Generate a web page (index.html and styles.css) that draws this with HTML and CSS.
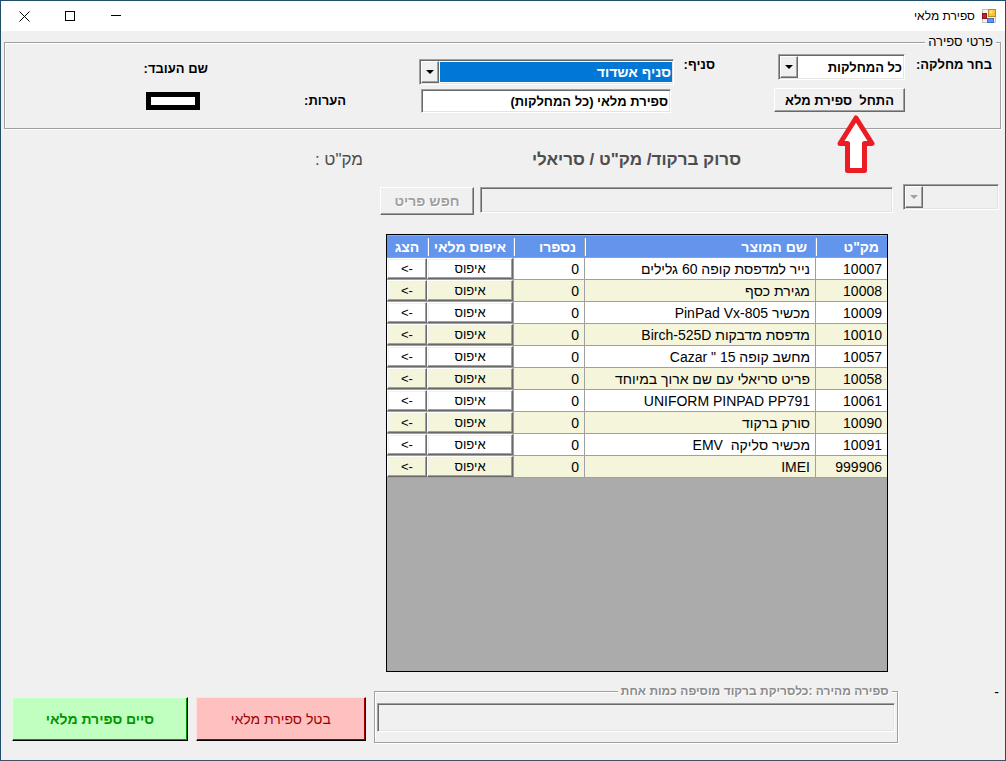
FILE: index.html
```html
<!DOCTYPE html>
<html lang="he" dir="rtl">
<head>
<meta charset="utf-8">
<title>ספירת מלאי</title>
<link rel="stylesheet" href="styles.css">
</head>
<body class="window">
  <header class="titlebar">
    <svg class="app-icon" width="14" height="14" viewBox="0 0 14 14" aria-hidden="true">
      <rect x="0.5" y="0.5" width="13" height="13" fill="#f4f4f4" stroke="#c4c4c4"/>
      <rect x="6.5" y="0.5" width="7" height="7" fill="#f7c62f" stroke="#c08a14"/>
      <rect x="7.5" y="1.5" width="3" height="3" fill="#fde78a"/>
      <rect x="0.5" y="4.5" width="4" height="5" fill="#c8202a" stroke="#8e141c"/>
      <rect x="5.5" y="9.5" width="6" height="4" fill="#5c98ee" stroke="#3a6ccc"/>
    </svg>
    <h1 class="titlebar-text">ספירת מלאי</h1>
    <button class="caption-button" type="button" aria-label="מזער">
      <svg width="11" height="11" viewBox="0 0 11 11"><path d="M0 4.5H10" stroke="#000"/></svg>
    </button>
    <button class="caption-button" type="button" aria-label="הגדל">
      <svg width="11" height="11" viewBox="0 0 11 11"><rect x="0.5" y="0.5" width="9" height="9" fill="none" stroke="#000"/></svg>
    </button>
    <button class="caption-button" type="button" aria-label="סגור">
      <svg width="11" height="11" viewBox="0 0 11 11"><path d="M0.5 0.5L10.5 10.5M10.5 0.5L0.5 10.5" stroke="#000"/></svg>
    </button>
  </header>

  <fieldset class="group details">
    <legend class="details-legend">פרטי ספירה</legend>
    <div class="details-grid">
      <div class="department">
        <label class="field-label" for="department">בחר מחלקה:</label>
        <div class="combo">
          <select id="department" class="combo-select"><option>כל המחלקות</option></select>
          <span class="combo-arrow"></span>
        </div>
        <div class="start">
          <button class="button start-button" type="button">התחל  ספירת מלא</button>
          <svg class="pointer" width="38" height="58" viewBox="0 0 38 58" aria-hidden="true">
            <path d="M19 3L35 28.500H27.500V55.500H10.500V28.500H3Z" fill="#fff" stroke="#ed1c24" stroke-width="5" stroke-linejoin="round"/>
          </svg>
        </div>
      </div>
      <div class="branch">
        <div class="branch-row">
          <label class="field-label branch-label" for="branch">סניף:</label>
          <div class="combo">
            <select id="branch" class="combo-select combo-selected"><option>סניף אשדוד</option></select>
            <span class="combo-arrow"></span>
          </div>
        </div>
        <div class="notes-row">
          <input class="textbox notes-input" type="text" id="notes" value="ספירת מלאי (כל המחלקות)">
          <label class="field-label" for="notes">הערות:</label>
        </div>
      </div>
      <div class="worker">
        <span class="field-label">שם העובד:</span>
        <div class="worker-name"></div>
      </div>
    </div>
  </fieldset>

  <main class="content">
    <label class="scan-label" for="scan">סרוק ברקוד/ מק"ט / סריאלי</label>
    <div class="sku-label">מק"ט :</div>
    <div class="combo combo-disabled">
      <select class="combo-select" aria-label="סוג" disabled><option></option></select>
      <span class="combo-arrow"></span>
    </div>
    <div class="search">
      <input class="textbox search-input" type="text" id="scan" disabled>
      <button class="button search-button" type="button" disabled>חפש פריט</button>
    </div>
    <div class="grid-view">
      <table class="items">
        <colgroup><col class="col-sku"><col><col class="col-count"><col class="col-reset"><col class="col-show"></colgroup>
        <thead>
          <tr><th>מק"ט</th><th>שם המוצר</th><th>נספרו</th><th class="center">איפוס מלאי</th><th class="center">הצג</th></tr>
        </thead>
        <tbody>
          <tr><td>10007</td><td>נייר למדפסת קופה 60 גלילים</td><td>0</td><td class="action"><button type="button">איפוס</button></td><td class="action"><button type="button">-&gt;</button></td></tr>
          <tr><td>10008</td><td>מגירת כסף</td><td>0</td><td class="action"><button type="button">איפוס</button></td><td class="action"><button type="button">-&gt;</button></td></tr>
          <tr><td>10009</td><td>מכשיר PinPad Vx-805</td><td>0</td><td class="action"><button type="button">איפוס</button></td><td class="action"><button type="button">-&gt;</button></td></tr>
          <tr><td>10010</td><td>מדפסת מדבקות Birch-525D</td><td>0</td><td class="action"><button type="button">איפוס</button></td><td class="action"><button type="button">-&gt;</button></td></tr>
          <tr><td>10057</td><td>מחשב קופה 15 " Cazar</td><td>0</td><td class="action"><button type="button">איפוס</button></td><td class="action"><button type="button">-&gt;</button></td></tr>
          <tr><td>10058</td><td>פריט סריאלי עם שם ארוך במיוחד</td><td>0</td><td class="action"><button type="button">איפוס</button></td><td class="action"><button type="button">-&gt;</button></td></tr>
          <tr><td>10061</td><td>UNIFORM PINPAD PP791</td><td>0</td><td class="action"><button type="button">איפוס</button></td><td class="action"><button type="button">-&gt;</button></td></tr>
          <tr><td>10090</td><td>סורק ברקוד</td><td>0</td><td class="action"><button type="button">איפוס</button></td><td class="action"><button type="button">-&gt;</button></td></tr>
          <tr><td>10091</td><td>מכשיר סליקה  EMV</td><td>0</td><td class="action"><button type="button">איפוס</button></td><td class="action"><button type="button">-&gt;</button></td></tr>
          <tr><td>999906</td><td>IMEI</td><td>0</td><td class="action"><button type="button">איפוס</button></td><td class="action"><button type="button">-&gt;</button></td></tr>
        </tbody>
      </table>
    </div>
  </main>

  <footer class="footer">
    <div class="status">-</div>
    <fieldset class="group quick">
      <legend class="quick-legend"><label for="quick">ספירה מהירה :כלסריקת ברקוד מוסיפה כמות אחת</label></legend>
      <input class="textbox quick-input" type="text" id="quick" disabled>
    </fieldset>
    <button class="big-button cancel" type="button">בטל ספירת מלאי</button>
    <button class="big-button finish" type="button">סיים ספירת מלאי</button>
  </footer>
</body>
</html>
```
FILE: styles.css
```css
* {
  box-sizing: border-box;
}

.window {
  display: flex;
  flex-direction: column;
  min-height: 100vh;
  margin: 0;
  border: 1px solid #1f4e6b;
  border-bottom-color: #4c4c68;
  background: #f0f0f0;
  color: #000;
  font-family: "Liberation Sans", sans-serif;
  font-size: 14px;
}

button,
input,
select {
  margin: 0;
  padding: 0;
  border-radius: 0;
  color: inherit;
  font: inherit;
}

/* Title bar */
.titlebar {
  display: flex;
  align-items: center;
  height: 30px;
  padding-right: 9px;
  background: #fff;
}

.titlebar-text {
  flex: 1;
  margin: 0 7px 0 0;
  font-size: 12px;
  font-weight: 400;
}

.caption-button {
  display: flex;
  align-items: center;
  justify-content: center;
  width: 46px;
  height: 28px;
  border: 0;
  background: none;
}

/* Shared controls */
.group {
  min-width: 0;
  margin: 0;
  padding: 0;
  border: 1px solid #a0a0a0;
  box-shadow: 1px 1px 0 #fff, inset 1px 1px 0 #fff;
}

.group > legend {
  background: #f0f0f0;
}

.field-label {
  font-size: 13px;
  font-weight: 700;
  line-height: 22px;
  white-space: nowrap;
}

.textbox,
.combo {
  border: 1px solid;
  border-color: #a0a0a0 #fff #fff #a0a0a0;
  background: #fff;
  box-shadow: inset 1px 1px 0 #696969, inset -1px -1px 0 #e3e3e3;
}

.textbox {
  min-width: 0;
  padding: 0 2px;
  font-size: 13px;
  font-weight: 700;
}

.textbox:disabled {
  background: #f0f0f0;
}

.combo {
  position: relative;
  display: flex;
  height: 26px;
  padding: 2px 1px 2px 2px;
}

.combo-select {
  flex: 1;
  min-width: 0;
  margin-left: 18px;
  padding: 0 1px;
  border: 0;
  appearance: none;
  background: transparent;
  font-size: 13px;
  font-weight: 700;
}

.combo-selected {
  background: #0078d7;
  color: #fff;
  font-size: 14px;
}

.combo-arrow {
  position: absolute;
  top: 1px;
  bottom: 1px;
  left: 1px;
  display: flex;
  align-items: center;
  justify-content: center;
  width: 18px;
  border: 1px solid;
  border-color: #fff #696969 #696969 #fff;
  background: #f0f0f0;
  box-shadow: inset -1px -1px 0 #a0a0a0;
  pointer-events: none;
}

.combo-arrow::before {
  content: "";
  border: 4px solid transparent;
  border-top-color: #000;
  border-bottom-width: 0;
}

.combo-disabled {
  background: #f0f0f0;
}

.combo-disabled .combo-arrow::before {
  border-top-color: #a0a0a0;
}

.button {
  border: 1px solid;
  border-color: #fff #696969 #696969 #fff;
  background: #f0f0f0;
  box-shadow: inset -1px -1px 0 #a0a0a0;
  font-weight: 700;
  white-space: pre;
}

/* Count details */
.details {
  margin: 4px 4px 0 3px;
}

.details-legend {
  margin-right: 4px;
  padding: 0 3px;
  font-size: 13px;
  line-height: 14px;
}

.details-grid {
  display: grid;
  grid-template-columns: 277fr 507fr 203fr;
  padding: 5px 8px 15px 0;
}

.department {
  display: grid;
  grid-template-columns: 78px 127px;
  gap: 8px 9px;
  align-content: start;
}

.start {
  position: relative;
  grid-column: 2;
}

.start-button {
  width: 131px;
  height: 24px;
  font-size: 13px;
}

.pointer {
  position: absolute;
  top: 27px;
  right: 30px;
}

.branch-row,
.notes-row {
  display: flex;
}

.branch-label {
  width: 41px;
}

.branch-row .combo {
  width: 255px;
  margin-top: 5px;
}

.notes-row {
  align-items: center;
  gap: 75px;
  padding: 4px 44px 0 0;
}

.notes-input {
  width: 250px;
  height: 24px;
}

.worker {
  padding-top: 4px;
}

.worker-name {
  width: 54px;
  height: 18px;
  margin: 12px 8px 0 0;
  border: 5px solid #000;
  background: #fff;
}

/* Scan area */
.content {
  flex: 1;
  display: grid;
  grid-template-columns: 96px 513fr 358fr;
  grid-template-rows: auto auto 1fr;
  column-gap: 10px;
  padding: 20px 6px 0 11px;
}

.scan-label,
.sku-label {
  margin-bottom: 13px;
  color: #4d4d4d;
  font-size: 17px;
  line-height: 22px;
}

.scan-label {
  grid-column: 2;
  font-weight: 700;
  text-align: center;
}

.sku-label {
  padding-right: 7px;
}

.search {
  display: flex;
  gap: 6px;
  padding-top: 3px;
}

.search-input {
  flex: 1;
  height: 26px;
}

.search-button {
  width: 94px;
  height: 28px;
  color: #a0a0a0;
  font-size: 14px;
  text-shadow: 1px 1px 0 #fff;
}

.grid-view {
  grid-column: 2;
  margin: 19px 5px 0 6px;
  padding-top: 1px;
  border: 1px solid #000;
  background: #ababab;
}

.items {
  width: 100%;
  border-spacing: 0;
  table-layout: fixed;
}

.col-sku {
  width: 72px;
}

.col-count {
  width: 71px;
}

.col-reset {
  width: 86px;
}

.col-show {
  width: 40px;
}

.items th {
  height: 22px;
  padding: 0 8px;
  border-bottom: 1px solid #a0a0a0;
  background: linear-gradient(to right, #a0a0a0 1px, #fff 1px) left center / 2px 18px no-repeat #6495ed;
  color: #fff;
  font-size: 14px;
  line-height: 20px;
  text-align: right;
  white-space: nowrap;
}

.items th.center {
  padding: 0;
  text-align: center;
}

.items th:last-child {
  background: #6495ed;
}

.items td {
  height: 22px;
  padding: 0 5px;
  border-bottom: 1px solid #a0a0a0;
  border-left: 1px solid #a0a0a0;
  background: #fff;
  line-height: 20px;
  white-space: pre;
}

.items tr:nth-child(even) td {
  background: #f5f5dc;
}

.items td.action {
  padding: 0;
  border-left: 0;
}

.items td.action button {
  display: block;
  width: 100%;
  height: 21px;
  border: 1px solid;
  border-color: #fff #696969 #696969 #fff;
  background: transparent;
  box-shadow: inset -1px -1px 0 #a0a0a0, inset 1px 1px 0 #f0f0f0;
  font-size: 13px;
}

/* Bottom bar */
.footer {
  display: flex;
  gap: 8px;
  align-items: flex-end;
  padding: 12px 6px 17px 11px;
}

.status {
  flex: 94 1 0;
  align-self: flex-start;
}

.quick {
  flex: 525 1 0;
}

.quick-legend {
  margin-right: 5px;
  padding: 0 3px;
  color: #8c8c8c;
  font-size: 12px;
  font-weight: 700;
  line-height: 14px;
  text-shadow: 1px 1px 0 #fff;
}

.quick-input {
  display: block;
  width: calc(100% - 4px);
  height: 29px;
  margin: 5px 2px 10px;
}

.big-button {
  flex: 169 1 0;
  height: 44px;
  margin-bottom: 2px;
  border: 1px solid;
  font-size: 14px;
}

.cancel {
  border-color: #ffe0e0 #000 #000 #ffe0e0;
  background: #ffc0c0;
  box-shadow: inset -1px -1px 0 #a00000;
  color: #a00000;
}

.finish {
  flex-grow: 175;
  border-color: #e0ffe0 #000 #000 #e0ffe0;
  background: #c0ffc0;
  box-shadow: inset -1px -1px 0 #009600;
  color: #009600;
  font-weight: 700;
}
```
